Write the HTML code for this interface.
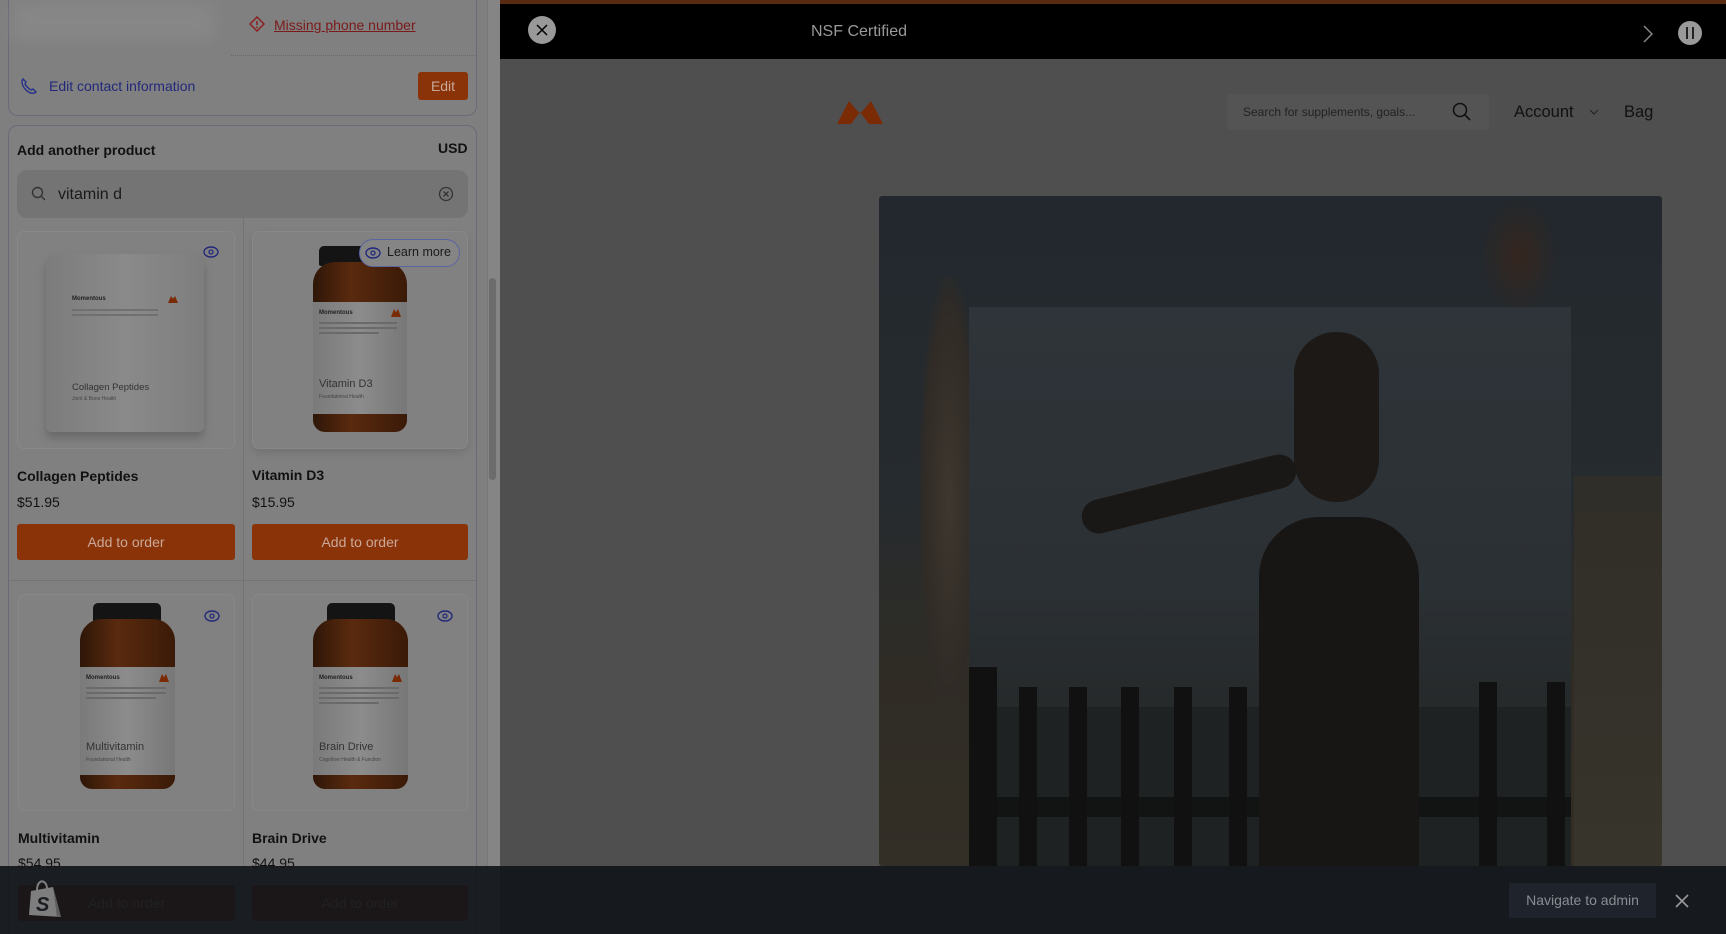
<!DOCTYPE html>
<html><head><meta charset="utf-8"><style>
*{margin:0;padding:0;box-sizing:border-box}
html{width:1726px;height:934px;overflow:hidden}
body{width:1726px;height:934px;overflow:hidden;background:#4f4f4f;font-family:"Liberation Sans",sans-serif;position:relative}
.abs{position:absolute}
.panel{left:0;top:0;width:500px;height:934px;background:#7f7f7f;z-index:5;overflow:hidden}
.card{background:#808080;border:1px solid #6a6a78;border-radius:10px}
.pname{font-weight:bold;font-size:14px;color:#111}
.price{font-size:14px;color:#111}
.btn{background:#8a3308;color:#c9a89a;font-size:14px;text-align:center;border-radius:3px}
.imgbox{background:#818181;border:1px solid #888;border-radius:7px;overflow:hidden}
.cap{position:absolute;background:#141414;border-radius:5px 5px 2px 2px}
.body{position:absolute;background:linear-gradient(90deg,#2e1608,#5a2a0e 40%,#3a1a08);border-radius:22px 22px 12px 12px}
.label{position:absolute;background:linear-gradient(90deg,#7a7a7a,#8c8c8c 50%,#777);}
.label .b{position:absolute;left:6px;top:8px;font-size:6px;font-weight:bold;color:#222}
.label .m{position:absolute;right:6px;top:7px;width:10px;height:8px;background:#7a2a05;clip-path:polygon(0 100%,30% 0,50% 40%,70% 0,100% 100%)}
.label .t{position:absolute;left:6px;top:88px;font-size:11px;color:#333}
.label .s{position:absolute;left:6px;top:104px;font-size:5px;color:#444}
.label .l{position:absolute;left:6px;height:2px;background:#6a6a6a}
</style></head><body>

<div class="abs" style="left:0;top:0;width:1726px;height:4px;background:#5a2a10"></div>
<div class="abs" style="left:0;top:4px;width:1726px;height:55px;background:#000"></div>
<div class="abs" style="left:528px;top:16px;width:28px;height:28px;border-radius:50%;background:#999"></div>
<svg class="abs" style="left:535px;top:23px" width="14" height="14"><path d="M2 2L12 12M12 2L2 12" stroke="#000" stroke-width="1.5"/></svg>
<div class="abs" style="left:811px;top:23px;font-size:16px;color:#999">NSF Certified</div>
<svg class="abs" style="left:1642px;top:24px" width="12" height="20"><path d="M2 2L10 10L2 18" stroke="#888" stroke-width="1.5" fill="none"/></svg>
<div class="abs" style="left:1678px;top:21px;width:24px;height:24px;border-radius:50%;background:#999"></div>
<div class="abs" style="left:1686px;top:27px;width:2px;height:12px;background:#222"></div>
<div class="abs" style="left:1692px;top:27px;width:2px;height:12px;background:#222"></div>

<svg class="abs" style="left:837px;top:100px" width="46" height="24"><path d="M0 24L12 1L23 14L34 1L46 24L32 24L23 12L14 24Z" fill="#7a2a05"/></svg>
<div class="abs" style="left:1227px;top:94px;width:262px;height:36px;background:#545454;border-radius:4px"></div>
<div class="abs" style="left:1243px;top:105px;font-size:12px;color:#222">Search for supplements, goals...</div>
<svg class="abs" style="left:1452px;top:102px" width="20" height="20"><circle cx="8" cy="8" r="6.5" stroke="#111" stroke-width="1.6" fill="none"/><path d="M13 13L18 18" stroke="#111" stroke-width="1.6"/></svg>
<div class="abs" style="left:1514px;top:103px;font-size:16.5px;color:#111">Account</div>
<svg class="abs" style="left:1589px;top:108px" width="10" height="8"><path d="M1 2L5 6L9 2" stroke="#222" fill="none"/></svg>
<div class="abs" style="left:1624px;top:103px;font-size:16.5px;color:#111">Bag</div>
<div class="abs" style="left:440px;top:196px;font-size:86px;color:#000;line-height:1">S</div>

<!-- photo -->
<div class="abs" style="left:879px;top:196px;width:783px;height:670px;border-radius:3px;overflow:hidden;background:linear-gradient(180deg,#22282d 0%,#262b2f 45%,#2f2c25 70%,#332f27 100%)">
  <div class="abs" style="left:40px;top:80px;width:60px;height:450px;background:radial-gradient(ellipse at center,#3e372f 0%,#302b26 60%,transparent 75%)"></div>
  <div class="abs" style="left:600px;top:0;width:80px;height:120px;background:radial-gradient(ellipse,#35261f,transparent 70%)"></div>
  <div class="abs" style="left:695px;top:280px;width:88px;height:390px;background:linear-gradient(180deg,#302e28,#37342b)"></div>
</div>
<div class="abs" style="left:969px;top:307px;width:602px;height:559px;overflow:hidden;background:linear-gradient(180deg,#2e3439 0%,#2b3034 50%,#262a2b 70%,#1c1e1e 100%)">
  <div class="abs" style="left:0;top:400px;width:602px;height:160px;background:#1f2222"></div>
  <div class="abs" style="left:0;top:490px;width:602px;height:20px;background:#121313"></div>
  <div class="abs" style="left:0;top:360px;width:28px;height:200px;background:#111"></div>
  <div class="abs" style="left:50px;top:380px;width:18px;height:180px;background:#111"></div>
  <div class="abs" style="left:100px;top:380px;width:18px;height:180px;background:#111"></div>
  <div class="abs" style="left:152px;top:380px;width:18px;height:180px;background:#111"></div>
  <div class="abs" style="left:205px;top:380px;width:18px;height:180px;background:#111"></div>
  <div class="abs" style="left:260px;top:380px;width:18px;height:180px;background:#111"></div>
  <div class="abs" style="left:510px;top:375px;width:18px;height:185px;background:#111"></div>
  <div class="abs" style="left:578px;top:375px;width:18px;height:185px;background:#111"></div>
  <div class="abs" style="left:290px;top:210px;width:160px;height:360px;background:#181615;border-radius:60px 60px 0 0"></div>
  <div class="abs" style="left:325px;top:25px;width:85px;height:170px;background:#1c1917;border-radius:42px"></div>
  <div class="abs" style="left:110px;top:170px;width:220px;height:34px;background:#1a1816;border-radius:17px;transform:rotate(-14deg)"></div>
</div>

<!-- left panel -->
<div class="abs panel">
  <div class="abs" style="left:487px;top:0;width:13px;height:934px;background:#858585;border-left:1px solid #777"></div>
  <div class="abs" style="left:489px;top:278px;width:7px;height:202px;background:#6c6c6c;border-radius:4px"></div>

  <div class="abs card" style="left:8px;top:-12px;width:469px;height:128px"></div>
  <div class="abs" style="left:14px;top:4px;width:200px;height:36px;background:#878787;filter:blur(8px)"></div>
  <svg class="abs" style="left:249px;top:16px" width="16" height="16"><path d="M8 1L15 8L8 15L1 8Z" stroke="#8a1f1f" stroke-width="1.5" fill="none"/><path d="M8 5V9" stroke="#8a1f1f" stroke-width="1.5"/><circle cx="8" cy="11.3" r=".9" fill="#8a1f1f"/></svg>
  <div class="abs" style="left:274px;top:17px;font-size:14px;color:#7a1a1a;text-decoration:underline">Missing phone number</div>
  <div class="abs" style="left:231px;top:55px;width:245px;border-top:1px dotted #6a6a6a"></div>
  <svg class="abs" style="left:20px;top:77px" width="18" height="18"><path d="M3 2C1 4 2 9 6 13C10 17 14 17 16 15L13 12L11 13C9 12 6 9 5 7L6 5Z" stroke="#25308a" stroke-width="1.4" fill="none"/></svg>
  <div class="abs" style="left:49px;top:78px;font-size:14px;color:#22297a">Edit contact information</div>
  <div class="abs btn" style="left:418px;top:72px;width:50px;height:28px;line-height:28px;font-size:14px;border-radius:3px">Edit</div>

  <div class="abs card" style="left:8px;top:125px;width:469px;height:830px"></div>
  <div class="abs" style="left:17px;top:142px;font-size:14px;font-weight:bold;color:#111">Add another product</div>
  <div class="abs" style="left:438px;top:140px;font-size:14px;font-weight:bold;color:#111">USD</div>
  <div class="abs" style="left:17px;top:170px;width:451px;height:48px;background:#747474;border-radius:10px"></div>
  <svg class="abs" style="left:31px;top:186px" width="16" height="16"><circle cx="6.5" cy="6.5" r="5" stroke="#333" stroke-width="1.4" fill="none"/><path d="M10 10L14 14" stroke="#333" stroke-width="1.4"/></svg>
  <div class="abs" style="left:58px;top:186px;font-size:16px;color:#1a1a1a">vitamin d</div>
  <svg class="abs" style="left:438px;top:186px" width="16" height="16"><circle cx="8" cy="8" r="6.5" stroke="#333" stroke-width="1.3" fill="none"/><path d="M5.5 5.5L10.5 10.5M10.5 5.5L5.5 10.5" stroke="#333" stroke-width="1.3"/></svg>
  <div class="abs" style="left:243px;top:218px;width:1px;height:716px;background:#737373"></div>
  <div class="abs" style="left:9px;top:580px;width:467px;height:1px;background:#737373"></div>

  <div class="abs imgbox" style="left:17px;top:231px;width:218px;height:218px">
    <div class="abs" style="left:28px;top:22px;width:158px;height:178px;background:linear-gradient(90deg,#7c7c7c,#8a8a8a 50%,#7e7e7e);border-radius:10px 10px 6px 6px;box-shadow:0 6px 8px #6a6a6a">
      <div class="abs" style="left:26px;top:42px;font-size:6px;font-weight:bold;color:#222">Momentous</div>
      <div class="abs" style="left:122px;top:42px;width:10px;height:7px;background:#7a2a05;clip-path:polygon(0 100%,30% 0,50% 40%,70% 0,100% 100%)"></div>
      <div class="abs" style="left:26px;top:55px;width:86px;height:2px;background:#707070"></div>
      <div class="abs" style="left:26px;top:60px;width:86px;height:2px;background:#707070"></div>
      <div class="abs" style="left:26px;top:128px;font-size:9.5px;color:#333">Collagen Peptides</div>
      <div class="abs" style="left:26px;top:142px;font-size:5px;color:#444">Joint &amp; Bone Health</div>
    </div>
  </div>
  <svg class="abs" style="left:203px;top:245px" width="16" height="14"><ellipse cx="8" cy="7" rx="7" ry="5" stroke="#22297a" stroke-width="1.4" fill="none"/><circle cx="8" cy="7" r="2" stroke="#22297a" stroke-width="1.3" fill="none"/></svg>
  <div class="abs pname" style="left:17px;top:468px">Collagen Peptides</div>
  <div class="abs price" style="left:17px;top:494px">$51.95</div>
  <div class="abs btn" style="left:17px;top:524px;width:218px;height:36px;line-height:36px">Add to order</div>

  <div class="abs imgbox" style="left:252px;top:231px;width:216px;height:218px;box-shadow:0 4px 8px #727272">
    <div class="cap" style="left:66px;top:14px;width:80px;height:20px"></div>
    <div class="body" style="left:60px;top:30px;width:94px;height:170px"></div>
    <div class="label" style="left:60px;top:70px;width:94px;height:112px"><div class="b">Momentous</div><div class="m"></div><div class="l" style="top:20px;width:78px"></div><div class="l" style="top:25px;width:78px"></div><div class="l" style="top:30px;width:60px"></div><div class="t" style="top:76px">Vitamin D3</div><div class="s" style="top:92px">Foundational Health</div></div>
  </div>
  <div class="abs" style="left:359px;top:239px;width:101px;height:28px;border-radius:14px;background:#858585;border:1px solid #5a65a0"></div>
  <svg class="abs" style="left:365px;top:246px" width="16" height="14"><ellipse cx="8" cy="7" rx="7" ry="5" stroke="#22297a" stroke-width="1.4" fill="none"/><circle cx="8" cy="7" r="2" stroke="#22297a" stroke-width="1.3" fill="none"/></svg>
  <div class="abs" style="left:387px;top:245px;font-size:12.5px;color:#1a1a1a">Learn more</div>
  <div class="abs pname" style="left:252px;top:467px">Vitamin D3</div>
  <div class="abs price" style="left:252px;top:494px">$15.95</div>
  <div class="abs btn" style="left:252px;top:524px;width:216px;height:36px;line-height:36px">Add to order</div>

  <div class="abs imgbox" style="left:18px;top:594px;width:217px;height:217px">
    <div class="cap" style="left:74px;top:8px;width:68px;height:22px"></div>
    <div class="body" style="left:61px;top:24px;width:95px;height:170px"></div>
    <div class="label" style="left:61px;top:72px;width:95px;height:108px"><div class="b">Momentous</div><div class="m"></div><div class="l" style="top:20px;width:80px"></div><div class="l" style="top:25px;width:80px"></div><div class="l" style="top:30px;width:70px"></div><div class="t" style="top:74px">Multivitamin</div><div class="s" style="top:90px">Foundational Health</div></div>
  </div>
  <svg class="abs" style="left:204px;top:609px" width="16" height="14"><ellipse cx="8" cy="7" rx="7" ry="5" stroke="#22297a" stroke-width="1.4" fill="none"/><circle cx="8" cy="7" r="2" stroke="#22297a" stroke-width="1.3" fill="none"/></svg>
  <div class="abs pname" style="left:18px;top:830px">Multivitamin</div>
  <div class="abs price" style="left:18px;top:855px">$54.95</div>
  <div class="abs btn" style="left:18px;top:885px;width:217px;height:36px;line-height:36px">Add to order</div>

  <div class="abs imgbox" style="left:252px;top:594px;width:216px;height:217px">
    <div class="cap" style="left:74px;top:8px;width:68px;height:22px"></div>
    <div class="body" style="left:60px;top:24px;width:95px;height:170px"></div>
    <div class="label" style="left:60px;top:72px;width:95px;height:108px"><div class="b">Momentous</div><div class="m"></div><div class="l" style="top:20px;width:80px"></div><div class="l" style="top:25px;width:80px"></div><div class="l" style="top:30px;width:80px"></div><div class="l" style="top:35px;width:60px"></div><div class="t" style="top:74px">Brain Drive</div><div class="s" style="top:90px">Cognitive Health &amp; Function</div></div>
  </div>
  <svg class="abs" style="left:437px;top:609px" width="16" height="14"><ellipse cx="8" cy="7" rx="7" ry="5" stroke="#22297a" stroke-width="1.4" fill="none"/><circle cx="8" cy="7" r="2" stroke="#22297a" stroke-width="1.3" fill="none"/></svg>
  <div class="abs pname" style="left:252px;top:830px">Brain Drive</div>
  <div class="abs price" style="left:252px;top:855px">$44.95</div>
  <div class="abs btn" style="left:252px;top:885px;width:216px;height:36px;line-height:36px">Add to order</div>
</div>

<div class="abs" style="left:0;top:866px;width:1726px;height:68px;background:rgba(18,21,26,0.93);z-index:10"></div>
<svg class="abs" style="left:27px;top:879px;z-index:11" width="36" height="40"><path d="M4 12L26 8L34 38L2 36Z" fill="#7e7e7e"/><path d="M26 8L34 38L30 38Z" fill="#5e5e5e"/><path d="M10 11C10 4 14 1 17 3C20 5 20 9 20 10" stroke="#7e7e7e" stroke-width="2" fill="none"/><text x="9" y="32" font-family="Liberation Sans" font-weight="bold" font-style="italic" font-size="20" fill="#1a1d22">S</text></svg>
<div class="abs" style="left:1509px;top:883px;width:147px;height:35px;background:#1f232b;z-index:11;color:#8a8d93;font-size:14px;line-height:35px;text-align:center">Navigate to admin</div>
<svg class="abs" style="left:1675px;top:894px;z-index:11" width="14" height="14"><path d="M1 1L13 13M13 1L1 13" stroke="#999" stroke-width="1.6"/></svg>
</body></html>
